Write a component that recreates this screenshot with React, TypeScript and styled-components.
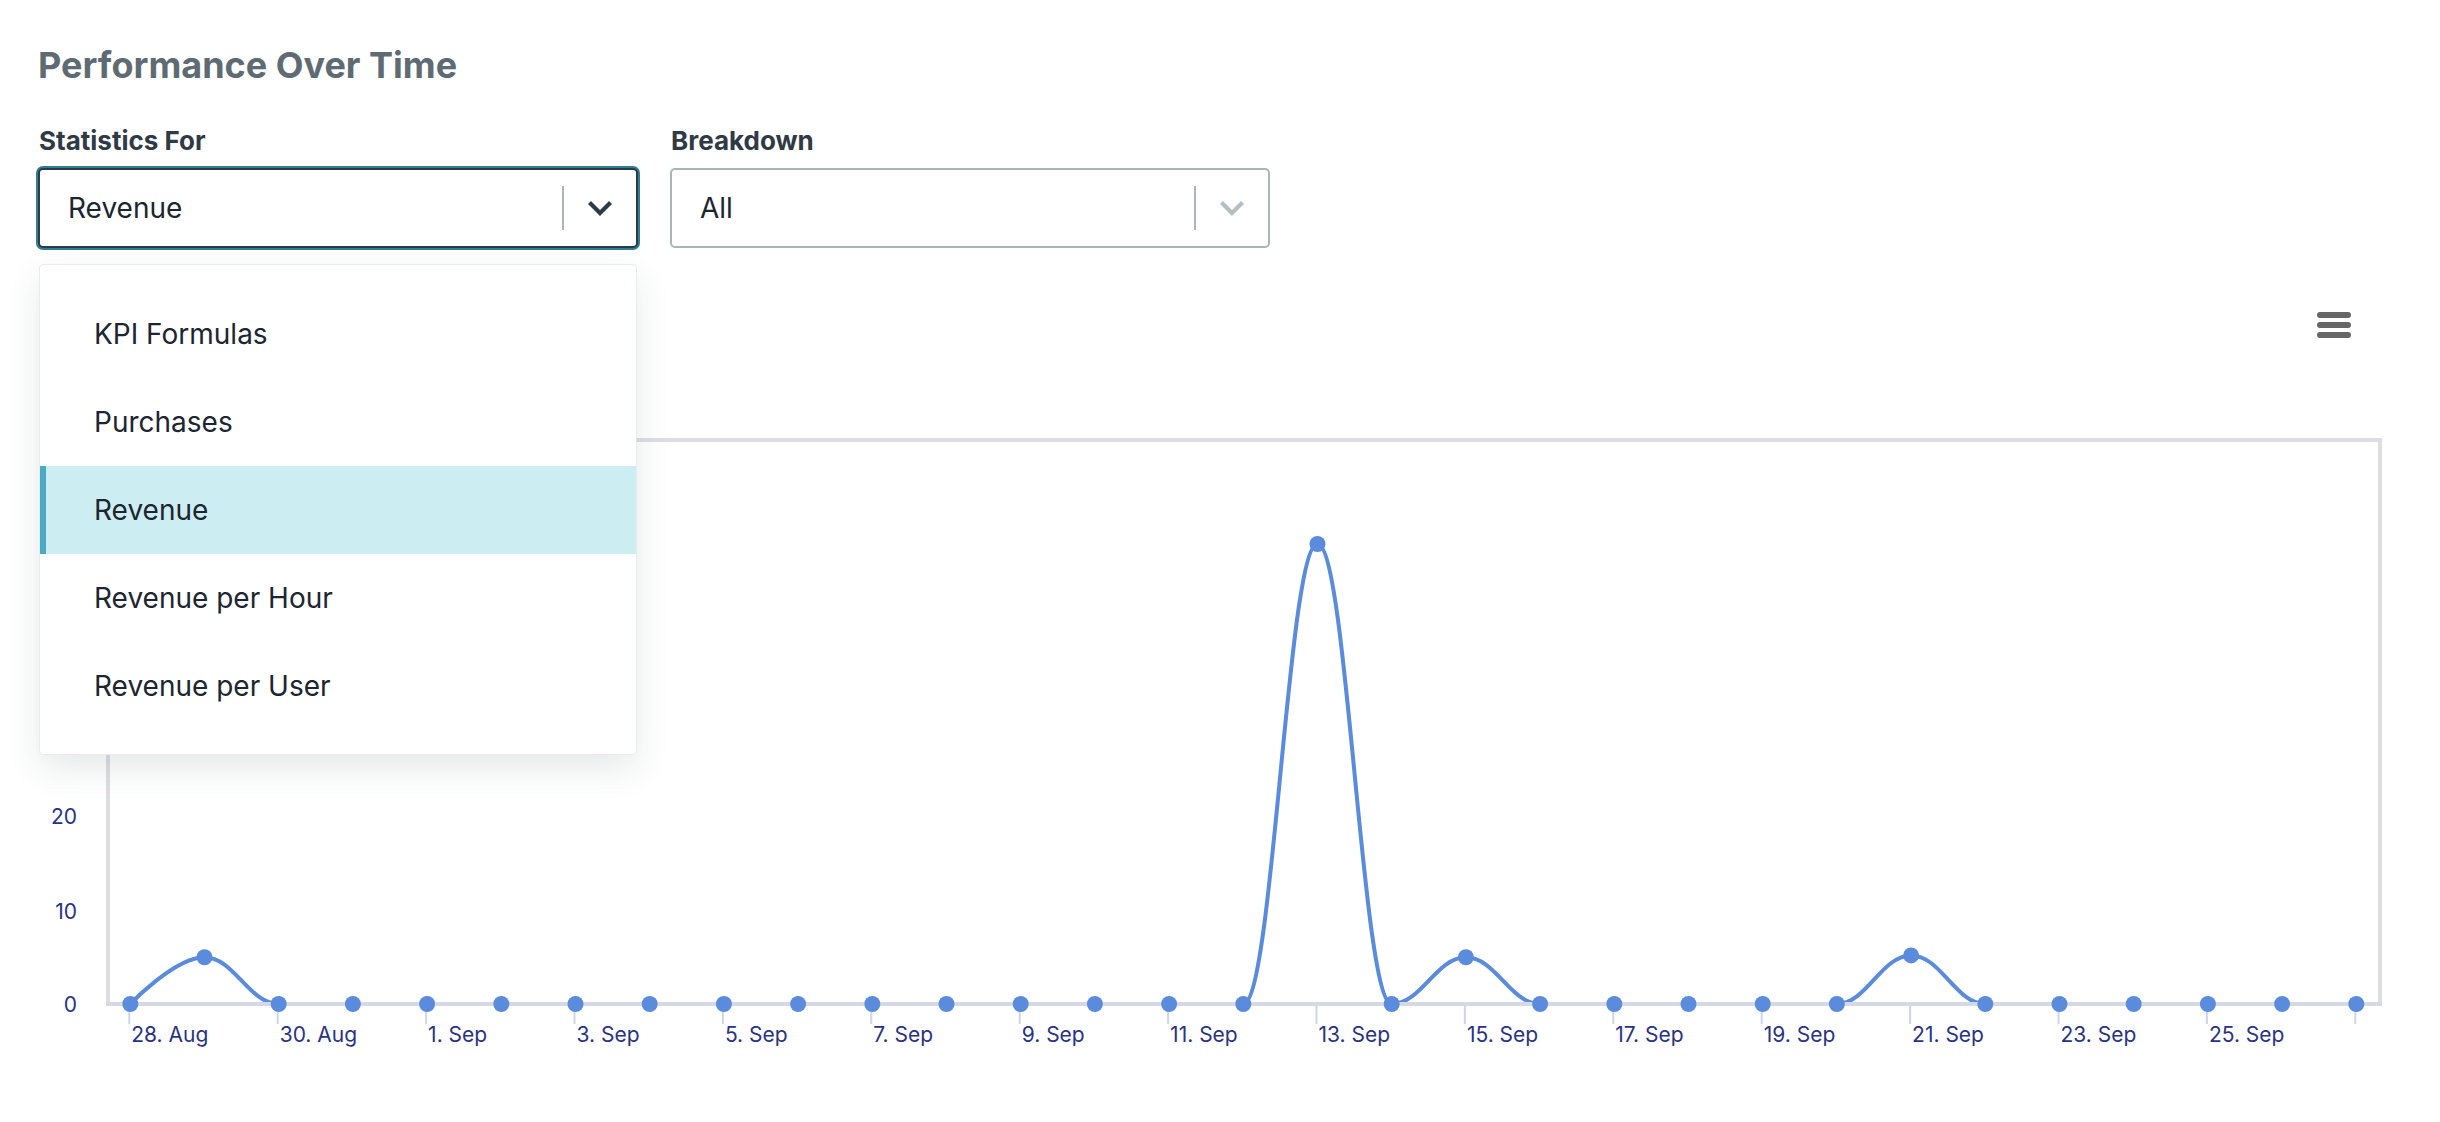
import React from "react";
import styled, { createGlobalStyle } from "styled-components";

const Global = createGlobalStyle`
  html, body { margin: 0; padding: 0; background: #fff; }
  body { font-family: "Inter", "Liberation Sans", sans-serif; overflow: hidden; }
`;

const Page = styled.div`
  width: 2440px;
  height: 1122px;
  background: #fff;
  overflow: hidden;
`;

const Header = styled.header`
  padding: 43px 0 0 38px;
`;

const Title = styled.h2`
  margin: 0;
  height: 44px;
  font-size: 36px;
  line-height: 44px;
  font-weight: 700;
  color: #5f6b73;
`;

const Filters = styled.div`
  display: flex;
  gap: 32px;
  margin-top: 37px;
`;

const Field = styled.div`
  position: relative;
  width: 600px;
`;

const Label = styled.label`
  display: block;
  height: 34px;
  padding-left: 1px;
  margin-bottom: 10px;
  font-size: 26px;
  line-height: 34px;
  font-weight: 700;
  color: #2f3a45;
`;

const Select = styled.div<{ $open?: boolean }>`
  box-sizing: border-box;
  display: flex;
  align-items: center;
  height: 80px;
  padding-left: 28px;
  border: 2px solid ${(p) => (p.$open ? "#2d3a47" : "#a9b5b8")};
  border-radius: 5px;
  box-shadow: ${(p) => (p.$open ? "0 0 0 2px #2f7f90" : "none")};
  background: #fff;
`;

const Value = styled.span`
  flex: 1;
  font-size: 28px;
  color: #1c2530;
`;

const Divider = styled.span`
  width: 2px;
  height: 44px;
  background: #a9b5b8;
`;

const Caret = styled.span<{ $open?: boolean }>`
  display: flex;
  align-items: center;
  justify-content: center;
  width: 72px;
  color: ${(p) => (p.$open ? "#2d3a47" : "#b4bfc2")};
`;

const Menu = styled.ul`
  position: absolute;
  z-index: 2;
  top: 140px;
  left: 1px;
  box-sizing: border-box;
  width: 598px;
  height: 491px;
  margin: 0;
  padding: 25px 0 24px;
  list-style: none;
  background: #fff;
  border: 1px solid #e8ecec;
  border-radius: 4px;
  box-shadow: 0 14px 34px rgba(40, 60, 60, 0.11);
`;

const Item = styled.li<{ $active?: boolean }>`
  display: flex;
  align-items: center;
  box-sizing: border-box;
  height: 88px;
  padding-left: 48px;
  border-left: 6px solid ${(p) => (p.$active ? "#4baac4" : "transparent")};
  background: ${(p) => (p.$active ? "#cceef3" : "transparent")};
  font-size: 28px;
  color: #1c2530;
`;

const ChartBar = styled.div`
  display: flex;
  justify-content: flex-end;
  box-sizing: border-box;
  height: 182px;
  padding: 64px 89px 0 0;
`;

const ChartSvg = styled.svg`
  display: block;
`;

const AxisText = styled.text`
  font-family: "Inter", "Liberation Sans", sans-serif;
  font-size: 21px;
  fill: #2a3382;
`;

const Chevron = () => (
  <svg width="26" height="16" viewBox="0 0 26 16">
    <path d="M2.5 2.5 L13 13 L23.5 2.5" fill="none" stroke="currentColor" strokeWidth="4.2" />
  </svg>
);

const Hamburger = () => (
  <svg width="34" height="26" viewBox="0 0 34 26">
    <rect x="0" y="0" width="34" height="6" rx="3" fill="#666" />
    <rect x="0" y="10" width="34" height="6" rx="3" fill="#666" />
    <rect x="0" y="20" width="34" height="6" rx="3" fill="#666" />
  </svg>
);

const X0 = 130.3;
const DX = 74.2;
const Y0 = 1004;
const UNIT = 9.35;

const values: number[] = Array.from({ length: 31 }, () => 0);
values[1] = 5;
values[16] = 49.2;
values[18] = 5;
values[24] = 5.2;

const points = values.map((v, i) => ({ x: X0 + DX * i, y: Y0 - v * UNIT }));

function splinePath(pts: { x: number; y: number }[]): string {
  const s = 1.5;
  const d = s + 1;
  const L: { x: number; y: number }[] = [];
  const R: { x: number; y: number }[] = [];
  pts.forEach((p, i) => {
    if (i === 0 || i === pts.length - 1) {
      L[i] = { ...p };
      R[i] = { ...p };
      return;
    }
    const a = pts[i - 1];
    const b = pts[i + 1];
    const lx = (s * p.x + a.x) / d;
    let ly = (s * p.y + a.y) / d;
    const rx = (s * p.x + b.x) / d;
    let ry = (s * p.y + b.y) / d;
    const c = ((ry - ly) * (rx - p.x)) / (rx - lx) + p.y - ry;
    ly += c;
    ry += c;
    if (ly > a.y && ly > p.y) {
      ly = Math.max(a.y, p.y);
      ry = 2 * p.y - ly;
    } else if (ly < a.y && ly < p.y) {
      ly = Math.min(a.y, p.y);
      ry = 2 * p.y - ly;
    }
    if (ry > b.y && ry > p.y) {
      ry = Math.max(b.y, p.y);
      ly = 2 * p.y - ry;
    } else if (ry < b.y && ry < p.y) {
      ry = Math.min(b.y, p.y);
      ly = 2 * p.y - ry;
    }
    L[i] = { x: lx, y: ly };
    R[i] = { x: rx, y: ry };
  });
  let out = `M ${pts[0].x} ${pts[0].y}`;
  for (let i = 1; i < pts.length; i++) {
    out += ` C ${R[i - 1].x} ${R[i - 1].y} ${L[i].x} ${L[i].y} ${pts[i].x} ${pts[i].y}`;
  }
  return out;
}

const tickLabels: string[] = [
  "28. Aug", "30. Aug", "1. Sep", "3. Sep", "5. Sep", "7. Sep", "9. Sep", "11. Sep",
  "13. Sep", "15. Sep", "17. Sep", "19. Sep", "21. Sep", "23. Sep", "25. Sep", "",
];

const yLabels = [
  { t: "0", y: 1012 },
  { t: "10", y: 919 },
  { t: "20", y: 824 },
];

const options = ["KPI Formulas", "Purchases", "Revenue", "Revenue per Hour", "Revenue per User"];

const Chart = () => (
  <ChartSvg width="2440" height="692" viewBox="0 430 2440 692">
    <rect x="108" y="440" width="2272" height="564" fill="none" stroke="#dedde3" strokeWidth="4" />
    {tickLabels.map((_, k) => {
      const x = X0 + DX * k * 2 - 1;
      return <line key={k} x1={x} x2={x} y1={1004} y2={1024} stroke="#ccd6eb" strokeWidth="2" />;
    })}
    <path d={splinePath(points)} fill="none" stroke="#5a8bdc" strokeWidth="4" />
    <line x1="106" x2="2382" y1="1004" y2="1004" stroke="#d5d9e6" strokeWidth="4" />
    {points.map((p, i) => (
      <circle key={i} cx={p.x} cy={p.y} r="8" fill="#5a8bdc" />
    ))}
    {yLabels.map((l) => (
      <AxisText key={l.t} x="77" y={l.y} textAnchor="end">
        {l.t}
      </AxisText>
    ))}
    {tickLabels.map((t, k) =>
      t ? (
        <AxisText key={t} x={X0 + DX * k * 2 + 1} y={1042}>
          {t}
        </AxisText>
      ) : null
    )}
  </ChartSvg>
);

export default function App() {
  return (
    <Page>
      <Global />
      <Header>
        <Title>Performance Over Time</Title>
        <Filters>
          <Field>
            <Label>Statistics For</Label>
            <Select $open>
              <Value>Revenue</Value>
              <Divider />
              <Caret $open>
                <Chevron />
              </Caret>
            </Select>
            <Menu>
              {options.map((o) => (
                <Item key={o} $active={o === "Revenue"}>
                  {o}
                </Item>
              ))}
            </Menu>
          </Field>
          <Field>
            <Label>Breakdown</Label>
            <Select>
              <Value>All</Value>
              <Divider />
              <Caret>
                <Chevron />
              </Caret>
            </Select>
          </Field>
        </Filters>
      </Header>
      <ChartBar>
        <Hamburger />
      </ChartBar>
      <Chart />
    </Page>
  );
}
